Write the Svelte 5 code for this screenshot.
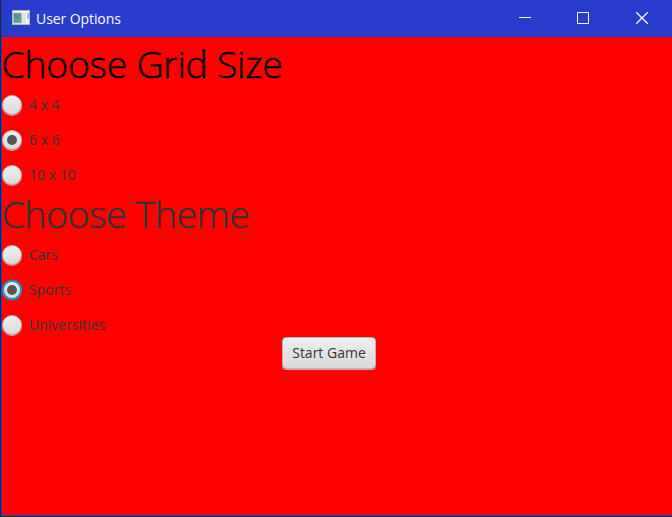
<script>
  const groups = $state([
    { title: 'Choose Grid Size', kind: 'grid', selected: '6 x 6', focused: false, options: ['4 x 4', '6 x 6', '10 x 10'] },
    { title: 'Choose Theme', kind: 'theme', selected: 'Sports', focused: true, options: ['Cars', 'Sports', 'Universities'] }
  ]);
</script>

<div class="window">
  <header>
    <svg class="app-icon" width="20" height="16" viewBox="0 0 20 16">
      <defs>
        <linearGradient id="pane" x1="0" y1="0" x2="1" y2="1">
          <stop offset="0" stop-color="#4b8ba2" />
          <stop offset="1" stop-color="#5fb083" />
        </linearGradient>
      </defs>
      <rect x="1.5" y=".5" width="17" height="14" fill="#f4f5f4" stroke="#b5b9b5" />
      <rect x="2.5" y="3" width="8" height="10" fill="url(#pane)" stroke="#aebfc0" stroke-width=".6" />
      <rect x="11" y="3" width="4" height="10" fill="#e2e5e6" />
      <rect x="16.5" y="3" width="1.2" height="6" fill="#63aa9d" />
    </svg>
    <span class="title">User Options</span>
    <div class="controls">
      <svg width="12" height="12" viewBox="0 0 12 12"><path d="M0 5.5h12" /></svg>
      <svg width="12" height="12" viewBox="0 0 12 12"><path d="M.5.5h11v11H.5z" /></svg>
      <svg width="12" height="12" viewBox="0 0 12 12"><path class="close" d="M.3.3l11.4 11.4M11.7.3L.3 11.7" /></svg>
    </div>
  </header>
  <main>
    {#each groups as group}
      <h1 class={group.kind}>{group.title}</h1>
      {#each group.options as option}
        <button class="option" onclick={() => (group.selected = option)}>
          <span class="radio" class:focused={group.focused && group.selected === option}>
            {#if group.selected === option}<span class="dot"></span>{/if}
          </span>
          <span class="label">{option}</span>
        </button>
      {/each}
    {/each}
    <button class="start"><span>Start Game</span></button>
  </main>
</div>

<style>
  .window {
    box-sizing: border-box;
    width: 672px;
    height: 517px;
    display: flex;
    flex-direction: column;
    border-left: 1px solid #20232c;
    border-bottom: 1px solid #20232c;
    background: #283ccb;
    font-family: "Open Sans", "Noto Sans", sans-serif;
    overflow: hidden;
  }
  header {
    height: 37px;
    flex: none;
    display: flex;
    align-items: center;
    padding-left: 10px;
    color: #fff;
  }
  .app-icon { margin-top: -1px; }
  .title {
    margin-left: 5px;
    font-size: 14px;
    letter-spacing: -0.08px;
  }
  .controls {
    margin-left: auto;
    display: flex;
    gap: 47px;
    padding-right: 24px;
    margin-top: -1px;
  }
  .controls svg:first-child { margin-right: -1px; }
  .controls path { fill: none; stroke: #fff; stroke-width: 1; }
  .controls .close { stroke-width: 1.25; }
  main {
    flex: 1;
    display: flex;
    flex-direction: column;
    align-items: flex-start;
    margin: 0 0 1px 1px;
    padding-top: 5px;
    background: #f00;
    color: #333;
  }
  h1 {
    margin: 0 0 0 -0.5px;
    height: 45px;
    line-height: 43px;
    font-size: 37.5px;
    font-weight: 300;
    letter-spacing: -0.33px;
    -webkit-text-stroke: 0.5px currentColor;
    white-space: nowrap;
  }
  .grid { color: #000; }
  .theme { letter-spacing: -0.45px; }
  button { font-family: inherit; color: #333; }
  .option {
    height: 35px;
    padding: 0;
    border: 0;
    background: none;
    display: flex;
    align-items: center;
    font-size: 14px;
  }
  .radio {
    box-sizing: border-box;
    width: 20px;
    height: 20px;
    border-radius: 50%;
    border: 1px solid #bcb8b8;
    background: linear-gradient(#eee, #dadada);
    box-shadow: inset 0 1px #fafafa, 0 1px #d9a09a;
    display: flex;
    align-items: center;
    justify-content: center;
  }
  .focused {
    border: 2px solid #159bc9;
    box-shadow: 0 0 0 .5px #50719b;
  }
  .dot {
    width: 10px;
    height: 10px;
    border-radius: 50%;
    background: #555;
  }
  .label { margin-left: 7px; letter-spacing: 0; }
  .start {
    box-sizing: border-box;
    width: 94px;
    height: 32px;
    margin-left: 280px;
    margin-top: -5px;
    padding: 0 0 1px;
    border: 1px solid #b5b5b5;
    border-radius: 4px;
    background: linear-gradient(#eee, #dadada);
    box-shadow: inset 0 1px #fafafa, 0 1px #d9a09a;
    font-size: 14px;
    white-space: nowrap;
  }
</style>
